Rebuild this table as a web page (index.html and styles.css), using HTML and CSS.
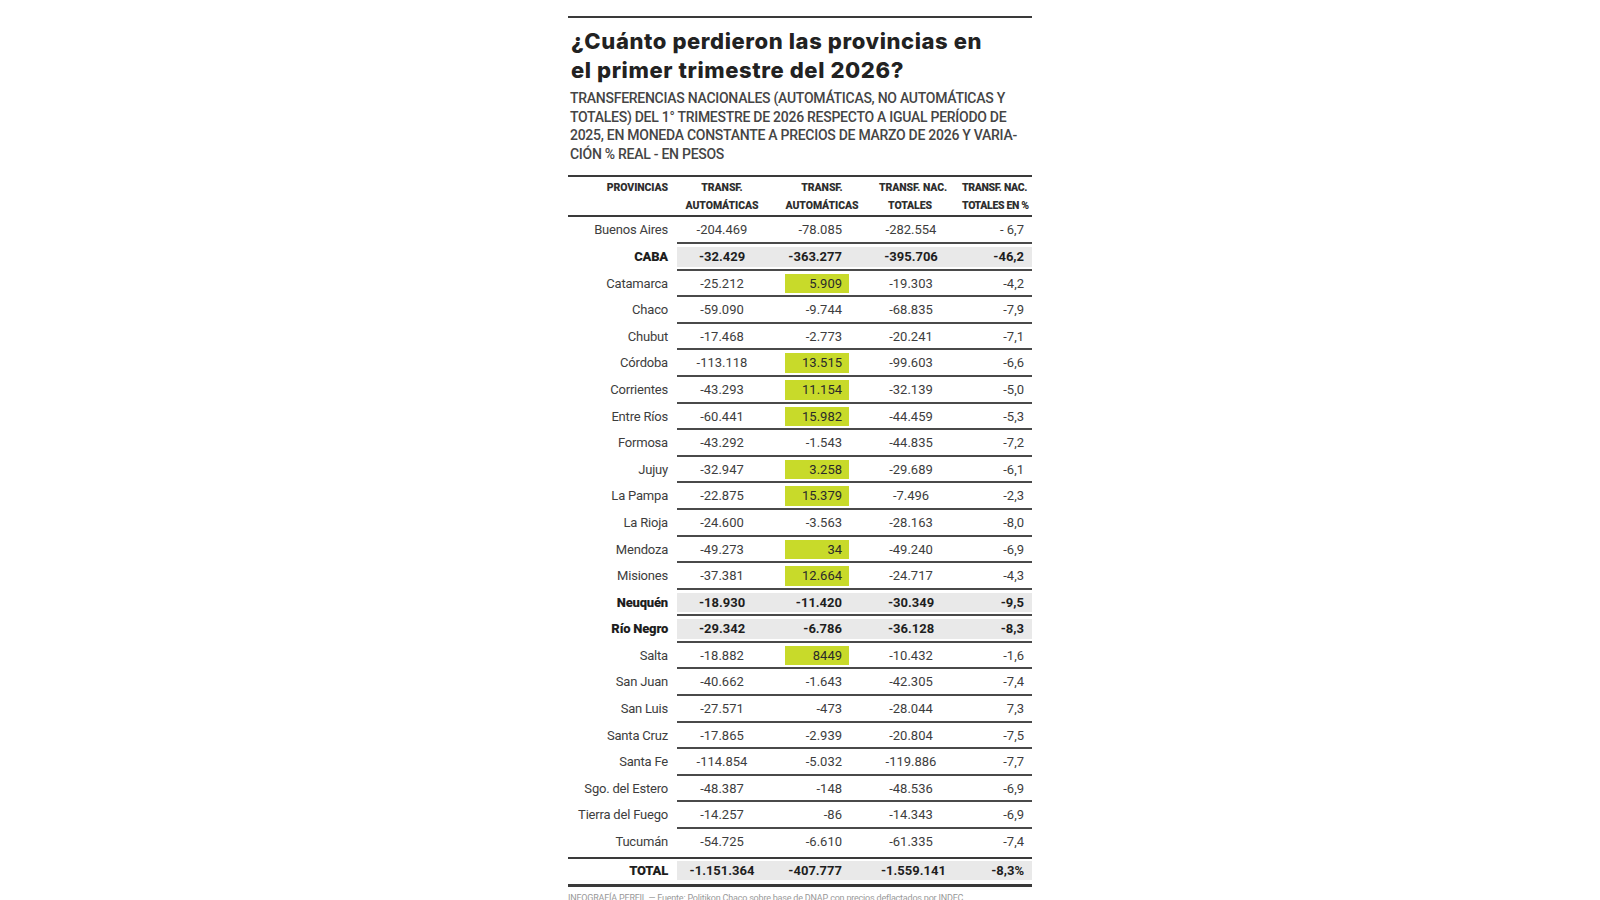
FILE: index.html
```html
<!DOCTYPE html>
<html lang="es">
<head>
  <meta charset="UTF-8">
  <meta name="viewport" content="width=device-width, initial-scale=1.0">
  <title>¿Cuánto perdieron las provincias?</title>
  <link rel="stylesheet" href="styles.css">
</head>
<body>

<div class="chart">
  <h1 class="title">¿Cuánto perdieron las provincias en<br>el primer trimestre del 2026?</h1>
  <p class="subtitle">Transferencias nacionales (automáticas, no automáticas y<br>totales) del 1° trimestre de 2026 respecto a igual período de<br>2025, en moneda constante a precios de marzo de 2026 y varia-<br>ción % real - en pesos</p>

  <div class="table">
    <!-- Header -->
    <div class="row head">
      <div class="prov">Provincias</div>
      <div class="vals">
        <span class="c1">Transf.<br>automáticas</span>
        <span class="c2">Transf.<br>automáticas</span>
        <span class="c3">Transf. nac.<br>totales</span>
        <span class="c4">Transf. nac.<br>totales en %</span>
      </div>
    </div>

    <div class="row"><div class="prov">Buenos Aires</div><div class="cell"><div class="vals"><span class="c1">-204.469</span><span class="c2"><i>-78.085</i></span><span class="c3">-282.554</span><span class="c4">- 6,7</span></div></div></div>
    <div class="row bold"><div class="prov">CABA</div><div class="cell"><div class="vals"><span class="c1">-32.429</span><span class="c2"><i>-363.277</i></span><span class="c3">-395.706</span><span class="c4">-46,2</span></div></div></div>
    <div class="row"><div class="prov">Catamarca</div><div class="cell"><div class="vals"><span class="c1">-25.212</span><span class="c2"><i class="up">5.909</i></span><span class="c3">-19.303</span><span class="c4">-4,2</span></div></div></div>
    <div class="row"><div class="prov">Chaco</div><div class="cell"><div class="vals"><span class="c1">-59.090</span><span class="c2"><i>-9.744</i></span><span class="c3">-68.835</span><span class="c4">-7,9</span></div></div></div>
    <div class="row"><div class="prov">Chubut</div><div class="cell"><div class="vals"><span class="c1">-17.468</span><span class="c2"><i>-2.773</i></span><span class="c3">-20.241</span><span class="c4">-7,1</span></div></div></div>
    <div class="row"><div class="prov">Córdoba</div><div class="cell"><div class="vals"><span class="c1">-113.118</span><span class="c2"><i class="up">13.515</i></span><span class="c3">-99.603</span><span class="c4">-6,6</span></div></div></div>
    <div class="row"><div class="prov">Corrientes</div><div class="cell"><div class="vals"><span class="c1">-43.293</span><span class="c2"><i class="up">11.154</i></span><span class="c3">-32.139</span><span class="c4">-5,0</span></div></div></div>
    <div class="row"><div class="prov">Entre Ríos</div><div class="cell"><div class="vals"><span class="c1">-60.441</span><span class="c2"><i class="up">15.982</i></span><span class="c3">-44.459</span><span class="c4">-5,3</span></div></div></div>
    <div class="row"><div class="prov">Formosa</div><div class="cell"><div class="vals"><span class="c1">-43.292</span><span class="c2"><i>-1.543</i></span><span class="c3">-44.835</span><span class="c4">-7,2</span></div></div></div>
    <div class="row"><div class="prov">Jujuy</div><div class="cell"><div class="vals"><span class="c1">-32.947</span><span class="c2"><i class="up">3.258</i></span><span class="c3">-29.689</span><span class="c4">-6,1</span></div></div></div>
    <div class="row"><div class="prov">La Pampa</div><div class="cell"><div class="vals"><span class="c1">-22.875</span><span class="c2"><i class="up">15.379</i></span><span class="c3">-7.496</span><span class="c4">-2,3</span></div></div></div>
    <div class="row"><div class="prov">La Rioja</div><div class="cell"><div class="vals"><span class="c1">-24.600</span><span class="c2"><i>-3.563</i></span><span class="c3">-28.163</span><span class="c4">-8,0</span></div></div></div>
    <div class="row"><div class="prov">Mendoza</div><div class="cell"><div class="vals"><span class="c1">-49.273</span><span class="c2"><i class="up">34</i></span><span class="c3">-49.240</span><span class="c4">-6,9</span></div></div></div>
    <div class="row"><div class="prov">Misiones</div><div class="cell"><div class="vals"><span class="c1">-37.381</span><span class="c2"><i class="up">12.664</i></span><span class="c3">-24.717</span><span class="c4">-4,3</span></div></div></div>
    <div class="row bold"><div class="prov">Neuquén</div><div class="cell"><div class="vals"><span class="c1">-18.930</span><span class="c2"><i>-11.420</i></span><span class="c3">-30.349</span><span class="c4">-9,5</span></div></div></div>
    <div class="row bold"><div class="prov">Río Negro</div><div class="cell"><div class="vals"><span class="c1">-29.342</span><span class="c2"><i>-6.786</i></span><span class="c3">-36.128</span><span class="c4">-8,3</span></div></div></div>
    <div class="row"><div class="prov">Salta</div><div class="cell"><div class="vals"><span class="c1">-18.882</span><span class="c2"><i class="up">8449</i></span><span class="c3">-10.432</span><span class="c4">-1,6</span></div></div></div>
    <div class="row"><div class="prov">San Juan</div><div class="cell"><div class="vals"><span class="c1">-40.662</span><span class="c2"><i>-1.643</i></span><span class="c3">-42.305</span><span class="c4">-7,4</span></div></div></div>
    <div class="row"><div class="prov">San Luis</div><div class="cell"><div class="vals"><span class="c1">-27.571</span><span class="c2"><i>-473</i></span><span class="c3">-28.044</span><span class="c4">7,3</span></div></div></div>
    <div class="row"><div class="prov">Santa Cruz</div><div class="cell"><div class="vals"><span class="c1">-17.865</span><span class="c2"><i>-2.939</i></span><span class="c3">-20.804</span><span class="c4">-7,5</span></div></div></div>
    <div class="row"><div class="prov">Santa Fe</div><div class="cell"><div class="vals"><span class="c1">-114.854</span><span class="c2"><i>-5.032</i></span><span class="c3">-119.886</span><span class="c4">-7,7</span></div></div></div>
    <div class="row"><div class="prov">Sgo. del Estero</div><div class="cell"><div class="vals"><span class="c1">-48.387</span><span class="c2"><i>-148</i></span><span class="c3">-48.536</span><span class="c4">-6,9</span></div></div></div>
    <div class="row"><div class="prov">Tierra del Fuego</div><div class="cell"><div class="vals"><span class="c1">-14.257</span><span class="c2"><i>-86</i></span><span class="c3">-14.343</span><span class="c4">-6,9</span></div></div></div>
    <div class="row last"><div class="prov">Tucumán</div><div class="cell"><div class="vals"><span class="c1">-54.725</span><span class="c2"><i>-6.610</i></span><span class="c3">-61.335</span><span class="c4">-7,4</span></div></div></div>

    <!-- Total -->
    <div class="row total bold"><div class="prov">TOTAL</div><div class="cell"><div class="vals"><span class="c1">-1.151.364</span><span class="c2"><i>-407.777</i></span><span class="c3">-1.559.141</span><span class="c4">-8,3%</span></div></div></div>
  </div>

  <p class="source">INFOGRAFÍA PERFIL — Fuente: Politikon Chaco sobre base de DNAP, con precios deflactados por INDEC</p>
</div>

</body>
</html>
```

FILE: styles.css
```css
body {
  margin: 0;
  background: #fff;
  color: #333;
  font-family: Roboto, "Liberation Sans", sans-serif;
  height: 900px;
  overflow: hidden;
}

.chart {
  width: 464px;
  margin: 16px auto 0;
  border-top: 2px solid #3a3a3a;
}

.title {
  font-family: Inter, "Noto Sans", sans-serif;
  font-size: 22px;
  font-weight: 800;
  line-height: 29px;
  color: #222;
  margin: 9px 0 0 3px;
  letter-spacing: 0.6px;
}

.subtitle {
  font-size: 14px;
  line-height: 18.6px;
  font-weight: 500;
  color: #454545;
  text-transform: uppercase;
  letter-spacing: -0.27px;
  margin: 4px 0 0 2px;
  white-space: nowrap;
}

.table {
  margin-top: 12px;
  border-top: 2px solid #3a3a3a;
}

.row {
  display: grid;
  grid-template-columns: 109px 355px;
  font-size: 13px;
  color: #3d3d3d;
}

.prov {
  text-align: right;
  padding-right: 9px;
  padding-top: 4px;
  line-height: 18px;
  white-space: nowrap;
  letter-spacing: -0.2px;
}

.cell {
  padding: 3px 0 2px;
  border-bottom: 2px solid #4a4a4a;
}

.vals {
  display: grid;
  grid-template-columns: 90px 110px 64px 91px;
  height: 19.6px;
  line-height: 19.6px;
}

.c1, .c3 {
  text-align: center;
}

.c3 {
  padding-left: 4px;
}

.c4 {
  text-align: right;
  padding-right: 8px;
}

.c2 i {
  display: block;
  font-style: normal;
  width: 64px;
  margin-left: 18px;
  padding-right: 7px;
  box-sizing: border-box;
  text-align: right;
}

.c2 i.up {
  background: #c8da2a;
  color: #2a2a2a;
}

/* bold rows: CABA, Neuquén, Río Negro, total */
.bold {
  font-weight: 700;
  color: #1e1e1e;
}

.bold .prov {
  font-weight: 900;
}

.bold .vals {
  background: #e9e9e9;
}

/* header */
.head {
  font-size: 10.5px;
  font-weight: 900;
  color: #2e2e2e;
  text-transform: uppercase;
  line-height: 17.5px;
  height: 40px;
  padding-top: 2px;
  box-sizing: border-box;
  border-bottom: 2px solid #3a3a3a;
  letter-spacing: -0.1px;
}

.head .prov {
  padding-top: 0;
  padding-right: 9px;
  line-height: 17.5px;
  letter-spacing: -0.1px;
}

.head .vals {
  height: auto;
  line-height: 17.5px;
}

.head .c2 {
  text-align: center;
}

.head .c3 {
  padding-left: 2px;
  white-space: nowrap;
}

.head .c4 {
  text-align: left;
  padding: 0 0 0 21px;
  white-space: nowrap;
  letter-spacing: -0.35px;
}

.last .cell {
  border-bottom-color: transparent;
}

.total {
  margin-top: 1px;
  border-top: 2px solid #3a3a3a;
  border-bottom: 3px solid #3a3a3a;
}

.total .cell {
  border-bottom: none;
  padding: 2px 0 4px;
}

.total .prov {
  padding-top: 3px;
}

.source {
  font-size: 9px;
  color: #999;
  margin: 6px 0 0;
  letter-spacing: -0.2px;
  white-space: nowrap;
}
```
